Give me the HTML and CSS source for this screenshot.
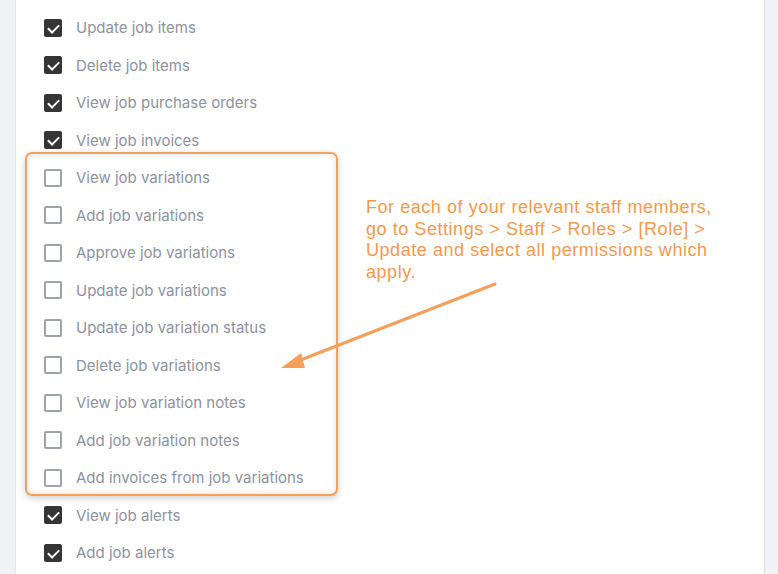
FILE: index.html
```html
<!DOCTYPE html>
<html>
<head>
<meta charset="utf-8">
<link rel="stylesheet" href="styles.css">
</head>
<body>
<div class="page">
  <div class="panel">
    <ul class="perms">
      <li class="row"><span class="cb on"></span><span>Update job items</span></li>
      <li class="row"><span class="cb on"></span><span>Delete job items</span></li>
      <li class="row"><span class="cb on"></span><span>View job purchase orders</span></li>
      <li class="row"><span class="cb on"></span><span>View job invoices</span></li>
      <li class="row"><span class="cb"></span><span>View job variations</span></li>
      <li class="row"><span class="cb"></span><span>Add job variations</span></li>
      <li class="row"><span class="cb"></span><span>Approve job variations</span></li>
      <li class="row"><span class="cb"></span><span>Update job variations</span></li>
      <li class="row"><span class="cb"></span><span>Update job variation status</span></li>
      <li class="row"><span class="cb"></span><span>Delete job variations</span></li>
      <li class="row"><span class="cb"></span><span>View job variation notes</span></li>
      <li class="row"><span class="cb"></span><span>Add job variation notes</span></li>
      <li class="row"><span class="cb"></span><span>Add invoices from job variations</span></li>
      <li class="row"><span class="cb on"></span><span>View job alerts</span></li>
      <li class="row"><span class="cb on"></span><span>Add job alerts</span></li>
    </ul>
    <div class="highlight"></div>
    <p class="note">For each of your relevant staff members,<br>go to Settings &gt; Staff &gt; Roles &gt; [Role] &gt;<br>Update and select all permissions which<br>apply.</p>
    <svg class="arrow" width="778" height="574" viewBox="0 0 778 574">
      <line x1="495" y1="284" x2="298" y2="361" stroke="#f5a05a" stroke-width="3" stroke-linecap="round"/>
      <polygon points="281,368 301,353 305,368" fill="#f5a05a"/>
    </svg>
  </div>
</div>
</body>
</html>
```
FILE: styles.css
```css
html, body {
  margin: 0;
  padding: 0;
}
body {
  background: #f1f2f6;
  width: 778px;
  height: 574px;
  overflow: hidden;
  font-family: Inter, "Liberation Sans", sans-serif;
}
.page {
  height: 574px;
  padding-left: 15px;
}
.panel {
  width: 748px;
  height: 574px;
  background: #ffffff;
  border-left: 1px solid #e4e5e8;
  border-right: 1px solid #dcdde0;
}
.perms {
  list-style: none;
  margin: 0;
  padding: 9px 0 0 28px;
}
.row {
  height: 37.5px;
  display: flex;
  align-items: center;
  gap: 14px;
  font-size: 15px;
  color: #8d929e;
}
.cb {
  width: 18px;
  height: 18px;
  box-sizing: border-box;
  border: 2px solid #9ea2ac;
  border-radius: 2px;
  flex: none;
  position: relative;
}
.cb.on {
  background: #353535;
  border-color: #353535;
}
.cb.on::after {
  content: "";
  position: absolute;
  left: 4px;
  top: 1px;
  width: 5px;
  height: 9px;
  border-right: 2px solid #fff;
  border-bottom: 2px solid #fff;
  transform: rotate(45deg);
}
.highlight {
  position: absolute;
  left: 25px;
  top: 152px;
  width: 313px;
  height: 344px;
  box-sizing: border-box;
  border: 2px solid #f5a05a;
  border-radius: 7px;
  box-shadow: 0 2px 7px rgba(0,0,0,0.2), inset 0 0 6px rgba(0,0,0,0.12);
}
.note {
  position: absolute;
  left: 366px;
  top: 197px;
  width: 400px;
  margin: 0;
  font-family: "Liberation Sans", Arial, sans-serif;
  font-size: 18px;
  letter-spacing: 0.55px;
  line-height: 21.5px;
  white-space: nowrap;
  color: #f5994c;
}
.arrow {
  position: absolute;
  left: 0;
  top: 0;
}
```
